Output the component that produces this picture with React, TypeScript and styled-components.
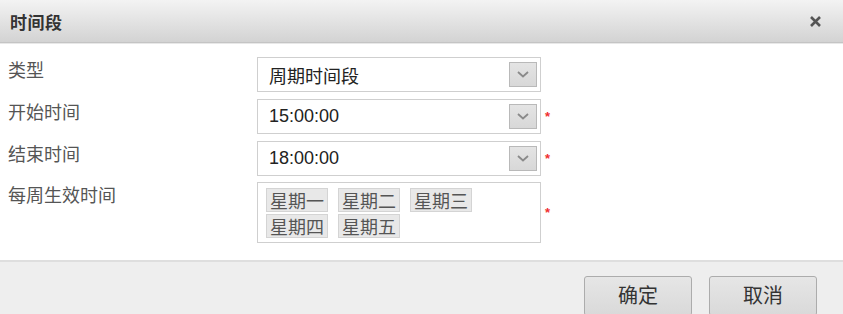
import styled, { createGlobalStyle } from "styled-components";

const GlobalStyle = createGlobalStyle`
  html, body {
    margin: 0;
    padding: 0;
    background: #fff;
  }
  body {
    font-family: "Liberation Sans", "Noto Sans CJK SC", sans-serif;
  }
`;

const Dialog = styled.div`
  width: 843px;
  height: 314px;
  display: flex;
  flex-direction: column;
  overflow: hidden;
  background: #fff;
`;

const Header = styled.div`
  box-sizing: border-box;
  height: 43px;
  flex-shrink: 0;
  display: flex;
  align-items: center;
  justify-content: space-between;
  padding: 0 21px 0 10px;
  background: linear-gradient(to bottom, #f3f3f3, #d3d3d3);
  border-bottom: 1px solid #c4c4c4;
  box-shadow: 0 1px 0 #e8e8e8;
`;

const Title = styled.div`
  font-family: "Noto Sans CJK SC", sans-serif;
  font-size: 17px;
  font-weight: bold;
  color: #333;
  letter-spacing: 0.5px;
`;

const Body = styled.div`
  flex: 1;
  display: flex;
  flex-direction: column;
  gap: 7px;
  padding: 14px 0 0 8px;
`;

const Row = styled.div<{ $tight?: boolean }>`
  display: grid;
  grid-template-columns: 249px 284px 14px;
  align-items: start;
  margin-top: ${(p) => (p.$tight ? "-1px" : "0")};
`;

const Label = styled.div`
  font-family: "Noto Sans CJK SC", sans-serif;
  font-size: 18px;
  color: #555;
  line-height: 22px;
  padding-top: 1px;
`;

const Select = styled.div`
  box-sizing: border-box;
  height: 35px;
  border: 1px solid #cfcfcf;
  display: flex;
  align-items: center;
  justify-content: space-between;
  padding: 0 3px 0 11px;
  font-size: 18px;
  color: #222;
`;

const SelectText = styled.span`
  font-family: "Liberation Sans", "Noto Sans CJK SC", sans-serif;
`;

const ArrowBox = styled.div`
  box-sizing: border-box;
  width: 28px;
  height: 25px;
  border: 1px solid #b9b9b9;
  background: linear-gradient(to bottom, #e4e4e4, #d8d8d8);
  display: flex;
  align-items: center;
  justify-content: center;
`;

const Required = styled.span`
  color: #f03030;
  font-size: 13px;
  font-weight: bold;
  padding-left: 4px;
  align-self: center;
`;

const TagBox = styled.div`
  box-sizing: border-box;
  height: 61px;
  border: 1px solid #cfcfcf;
  padding: 5px 8px;
  display: flex;
  flex-wrap: wrap;
  align-content: flex-start;
  column-gap: 10px;
  row-gap: 2px;
`;

const Tag = styled.span`
  box-sizing: border-box;
  height: 24px;
  padding: 0 3px;
  background: #e8e8e8;
  border: 1px solid #d4d4d4;
  font-family: "Noto Sans CJK SC", sans-serif;
  font-size: 18px;
  line-height: 22px;
  color: #555;
`;

const Footer = styled.div`
  box-sizing: border-box;
  height: 54px;
  flex-shrink: 0;
  border-top: 2px solid #dedede;
  background: #eeeeee;
  display: flex;
  justify-content: flex-end;
  align-items: flex-start;
  gap: 17px;
  padding: 14px 26px 0 0;
`;

const Button = styled.button`
  width: 108px;
  height: 40px;
  border: 1px solid #acacac;
  border-radius: 3px;
  background: linear-gradient(to bottom, #e6e6e6, #d9d9d9);
  font-family: "Noto Sans CJK SC", sans-serif;
  font-size: 20px;
  color: #333;
  padding: 0 0 3px;
`;

const Chevron = () => (
  <svg width="14" height="9" viewBox="0 0 14 9">
    <path d="M2 2 L7 6.5 L12 2" fill="none" stroke="#8a8a8a" strokeWidth="1.8" />
  </svg>
);

const CloseIcon = () => (
  <svg width="13" height="13" viewBox="0 0 13 13">
    <path d="M2 2 L11 11 M11 2 L2 11" stroke="#555" strokeWidth="2.6" />
  </svg>
);

const weekdays = ["星期一", "星期二", "星期三", "星期四", "星期五"];

const App = () => {
  return (
    <Dialog>
      <GlobalStyle />
      <Header>
        <Title>时间段</Title>
        <CloseIcon />
      </Header>
      <Body>
        <Row>
          <Label>类型</Label>
          <Select>
            <SelectText>周期时间段</SelectText>
            <ArrowBox>
              <Chevron />
            </ArrowBox>
          </Select>
        </Row>
        <Row>
          <Label>开始时间</Label>
          <Select>
            <SelectText>15:00:00</SelectText>
            <ArrowBox>
              <Chevron />
            </ArrowBox>
          </Select>
          <Required>*</Required>
        </Row>
        <Row>
          <Label>结束时间</Label>
          <Select>
            <SelectText>18:00:00</SelectText>
            <ArrowBox>
              <Chevron />
            </ArrowBox>
          </Select>
          <Required>*</Required>
        </Row>
        <Row $tight>
          <Label>每周生效时间</Label>
          <TagBox>
            {weekdays.map((d) => (
              <Tag key={d}>{d}</Tag>
            ))}
          </TagBox>
          <Required>*</Required>
        </Row>
      </Body>
      <Footer>
        <Button>确定</Button>
        <Button>取消</Button>
      </Footer>
    </Dialog>
  );
};

export default App;
